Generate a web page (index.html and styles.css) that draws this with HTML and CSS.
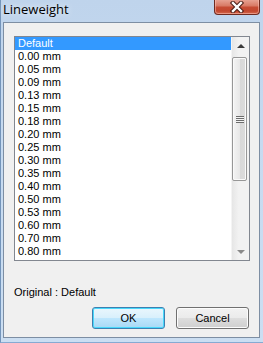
FILE: index.html
```html
<!DOCTYPE html>
<html lang="en">
<head>
    <meta charset="UTF-8">
    <title>Lineweight</title>
    <link rel="stylesheet" href="styles.css">
</head>
<body>
    <div class="window">
        <div class="titlebar">
            <div class="title">Lineweight</div>
            <button class="close-button">
                <svg width="16" height="12" viewBox="0 0 16 12">
                    <path d="M4 2 L12 10 M12 2 L4 10" stroke="#4b1d16" stroke-width="4.4" stroke-linecap="square" fill="none"/>
                    <path d="M4 2 L12 10 M12 2 L4 10" stroke="#ffffff" stroke-width="2.4" stroke-linecap="square" fill="none"/>
                </svg>
            </button>
        </div>
        <div class="client">
            <div class="listbox">
                <ul class="items">
                    <li class="selected">Default</li>
                    <li>0.00 mm</li>
                    <li>0.05 mm</li>
                    <li>0.09 mm</li>
                    <li>0.13 mm</li>
                    <li>0.15 mm</li>
                    <li>0.18 mm</li>
                    <li>0.20 mm</li>
                    <li>0.25 mm</li>
                    <li>0.30 mm</li>
                    <li>0.35 mm</li>
                    <li>0.40 mm</li>
                    <li>0.50 mm</li>
                    <li>0.53 mm</li>
                    <li>0.60 mm</li>
                    <li>0.70 mm</li>
                    <li>0.80 mm</li>
                </ul>
                <div class="scrollbar">
                    <div class="arrow-button"><span class="arrow up"></span></div>
                    <div class="track">
                        <div class="thumb">
                            <div class="grip"></div>
                        </div>
                    </div>
                    <div class="arrow-button"><span class="arrow down"></span></div>
                </div>
            </div>
            <div class="original">Original : Default</div>
            <div class="buttons">
                <button class="push-button default">OK</button>
                <button class="push-button">Cancel</button>
            </div>
        </div>
    </div>
</body>
</html>
```

FILE: styles.css
```css
body {
    margin: 0;
    padding: 0;
    font-family: "Liberation Sans", Arial, sans-serif;
    font-size: 11px;
    overflow: hidden;
}

/* Aero frame */
.window {
    width: 263px;
    height: 343px;
    box-sizing: border-box;
    display: flex;
    flex-direction: column;
    background: linear-gradient(180deg, #bfd4ec 0%, #c6daf0 40%, #cbdef2 100%);
    border-left: 1px solid #7394ba;
    border-bottom: 1px solid #86aad2;
}
.titlebar {
    height: 22px;
    display: flex;
    justify-content: space-between;
    align-items: flex-start;
    flex-shrink: 0;
}
.title {
    font-family: "Open Sans", "Noto Sans", sans-serif;
    font-size: 13px;
    line-height: 13px;
    padding: 3px 0 0 2px;
    color: #000;
    text-shadow: 0 0 6px rgba(255, 255, 255, 0.9);
}
.close-button {
    width: 46px;
    height: 16px;
    margin: -1px 3px 0 0;
    padding: 0;
    border: 1px solid #6e2a20;
    border-top: none;
    border-radius: 0 0 4px 4px;
    background: linear-gradient(180deg, #e9a799 0%, #d87a66 45%, #c64b34 55%, #c2472f 80%, #d56a4e 100%);
    box-shadow: inset 0 0 0 1px rgba(255, 200, 190, 0.5);
    display: flex;
    align-items: center;
    justify-content: center;
}

/* Client area */
.client {
    flex: 1;
    margin: 0 3px 4px 2px;
    border: 1px solid #7d8ea3;
    background-color: #f0f0f0;
    display: flex;
    flex-direction: column;
    padding: 13px 9px 0 10px;
}
.listbox {
    height: 225px;
    box-sizing: border-box;
    border: 1px solid #828790;
    background-color: #fff;
    display: flex;
}
.items {
    list-style: none;
    margin: 0;
    padding: 0;
    flex: 1;
}
.items li {
    height: 13px;
    line-height: 13px;
    padding-left: 3px;
    color: #000;
}
.items li.selected {
    background-color: #3399ff;
    color: #fff;
}

/* Scrollbar */
.scrollbar {
    width: 17px;
    display: flex;
    flex-direction: column;
    background: linear-gradient(90deg, #e6e6e6 0%, #f2f2f2 40%, #f2f2f2 100%);
    border-left: 1px solid #f4f4f4;
}
.arrow-button {
    height: 17px;
    display: flex;
    align-items: center;
    justify-content: center;
}
.arrow {
    width: 0;
    height: 0;
    border-left: 4px solid transparent;
    border-right: 4px solid transparent;
}
.arrow.up {
    border-bottom: 4px solid #3b3b3b;
}
.arrow.down {
    border-top: 4px solid #8a8a8a;
}
.track {
    flex: 1;
    padding-top: 3px;
}
.thumb {
    width: 15px;
    height: 124px;
    box-sizing: border-box;
    border: 1px solid #979797;
    border-radius: 2px;
    background: linear-gradient(90deg, #f4f4f4 0%, #e8e8e8 50%, #d8d8d8 51%, #dcdcdc 100%);
    box-shadow: inset 0 0 0 1px #fafafa;
    display: flex;
    align-items: center;
    justify-content: center;
}
.grip {
    width: 8px;
    height: 7px;
    background: repeating-linear-gradient(180deg, #6c6c6c 0, #6c6c6c 1px, #f4f4f4 1px, #f4f4f4 2px);
}

.original {
    margin-top: 25px;
    line-height: 13px;
    padding-left: 0;
}
.buttons {
    display: flex;
    justify-content: flex-end;
    gap: 11px;
    margin-top: 8px;
    padding-right: 1px;
}
.push-button {
    width: 73px;
    height: 22px;
    padding: 0;
    font-family: "Liberation Sans", Arial, sans-serif;
    font-size: 11px;
    color: #000;
    border: 1px solid #707070;
    border-radius: 3px;
    background: linear-gradient(180deg, #f2f2f2 0%, #ebebeb 48%, #dddddd 52%, #cfcfcf 100%);
    box-shadow: inset 0 0 0 1px #fcfcfc;
}
.push-button.default {
    border-color: #3c7fb1;
    background: linear-gradient(180deg, #eaf6fd 0%, #d9f0fc 48%, #bee6fd 52%, #a7d9f5 100%);
    box-shadow: inset 0 0 0 1px #48d8fb;
}
```
